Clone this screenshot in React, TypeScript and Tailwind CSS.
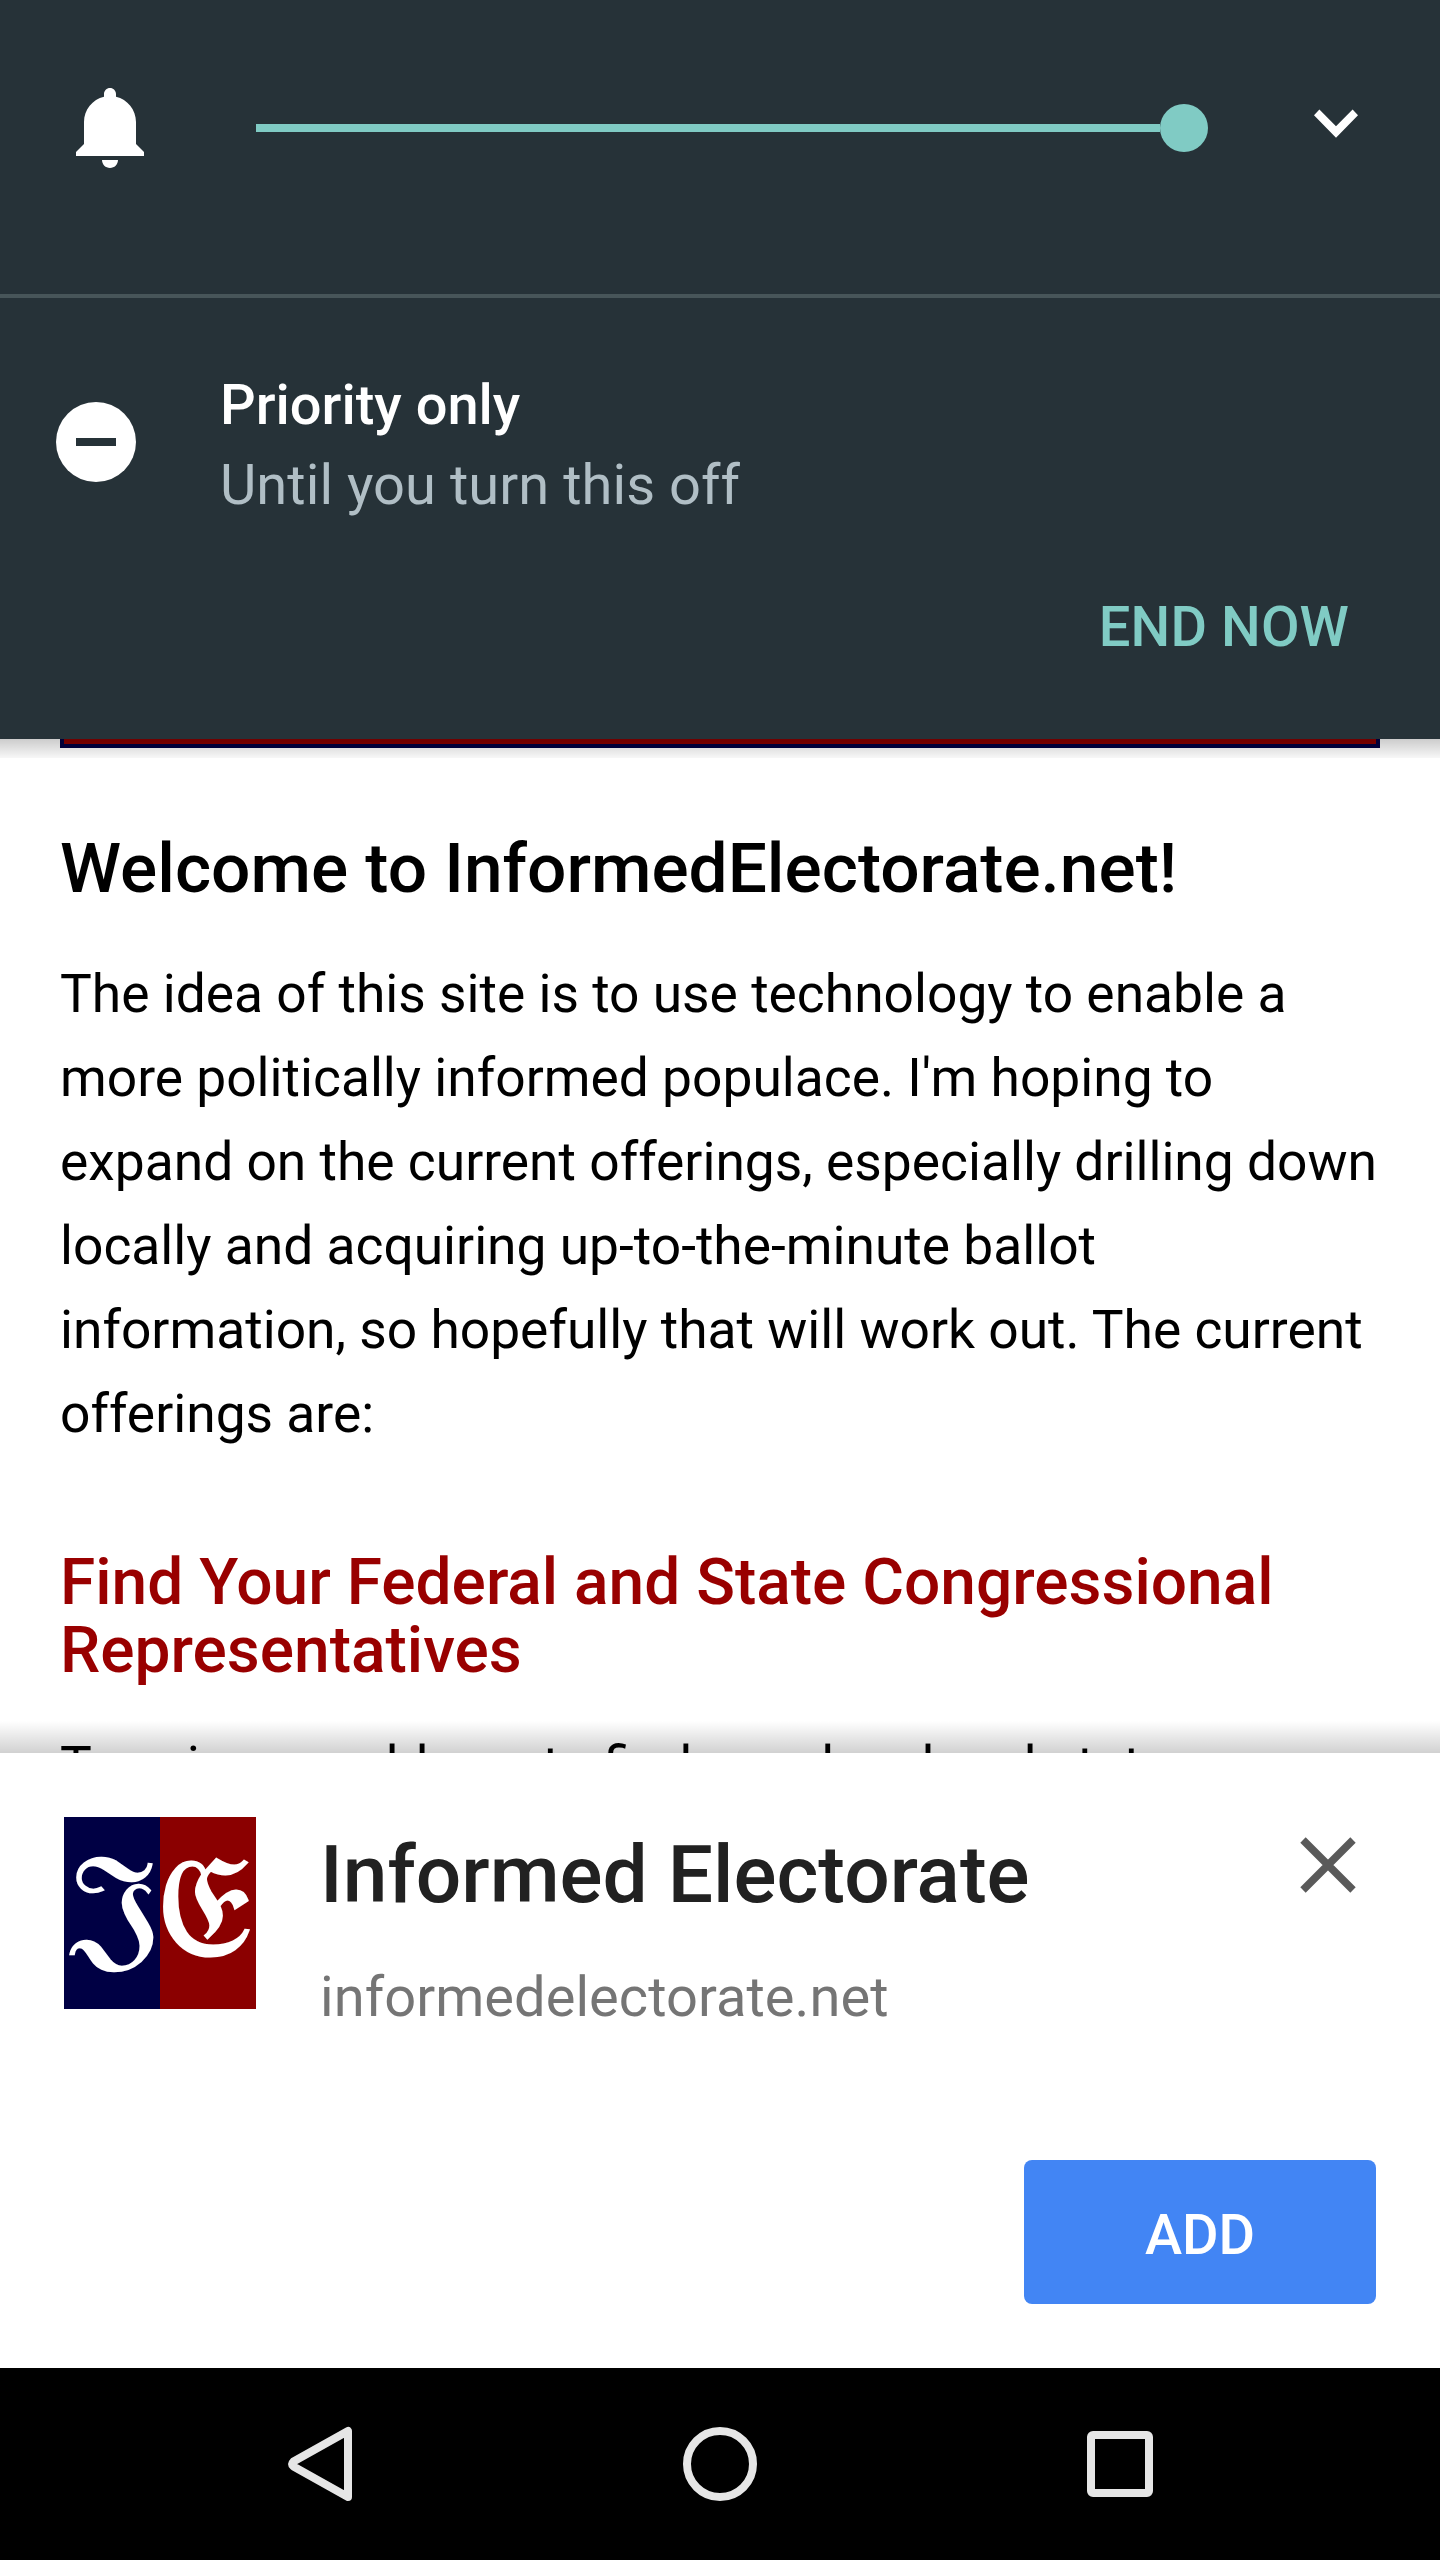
function VolumePanel() {
  return (
    <header className="h-[739px] shrink-0 bg-[#263238]">
      <div className="flex h-[294px] items-start">
        <svg className="mt-[80px] ml-[64px] size-[96px] fill-white" viewBox="0 0 24 24">
          <path d="M11.5 22c1.1 0 2-.9 2-2h-4c0 1.1.9 2 2 2zm6.5-6v-5.5c0-3.07-2.13-5.64-5-6.32V3.5c0-.83-.67-1.5-1.5-1.5S10 2.67 10 3.5v.68c-2.87.68-5 3.25-5 6.32V16l-2 2v1h17v-1l-2-2z" />
        </svg>
        <div className="mt-[104px] ml-[96px] flex h-12 w-[952px] items-center">
          <div className="h-2 flex-1 bg-[#80cbc4]" />
          <div className="size-12 rounded-full bg-[#80cbc4]" />
        </div>
        <svg className="mt-[76px] ml-[80px] size-[96px] fill-white" viewBox="0 0 96 96">
          <path d="M26 39.3 31.4 33.6 48 50.2 64.6 33.6 70 39.3 48 61.8Z" />
        </svg>
      </div>
      <div className="h-1 bg-[#475559]" />
      <div className="flex pt-[67px] pl-[56px]">
        <div className="mt-[37px] flex size-20 items-center justify-center rounded-full bg-white">
          <div className="h-2 w-10 bg-[#263238]" />
        </div>
        <div className="ml-[84px] text-[56px] leading-[80px]">
          <p className="font-medium text-white">Priority only</p>
          <p className="tracking-[0.05px] text-[#b0bec5]">Until you turn this off</p>
        </div>
      </div>
      <div className="mt-[69px] flex justify-end pr-[91px]">
        <button className="text-[56px] leading-[66px] font-medium tracking-[0.1px] text-[#80cbc4]">END NOW</button>
      </div>
    </header>
  );
}

function SitePage() {
  return (
    <main className="relative h-[1014px] shrink-0 overflow-hidden bg-white px-[60px] text-black">
      <div className="h-[9px] border-4 border-t-0 border-[#000044] bg-[#8b0000]" />
      <h1 className="mt-[80px] text-[69.4px] leading-[82px] font-medium whitespace-nowrap">
        Welcome to InformedElectorate.net!
      </h1>
      <p className="mt-[42px] text-[53.33px] leading-[84px] whitespace-nowrap">
        The idea of this site is to use technology to enable a<br />
        more politically informed populace. I'm hoping to<br />
        expand on the current offerings, especially drilling down<br />
        locally and acquiring up-to-the-minute ballot<br />
        information, so hopefully that will work out. The current<br />
        offerings are:
      </p>
      <h2 className="mt-[93px] text-[64px] leading-[68px] font-medium whitespace-nowrap text-[#990000]">
        Find Your Federal and State Congressional<br />
        Representatives
      </h2>
      <p className="mt-[39px] text-[53.33px] leading-[84px] whitespace-nowrap">
        Type in any address to find your local and state
      </p>
      <div className="absolute inset-x-0 top-0 h-[19px] bg-linear-to-b from-black/20 to-black/3" />
      <div className="absolute inset-x-0 bottom-0 h-[32px] bg-linear-to-b from-black/0 to-black/18" />
    </main>
  );
}

function SiteLogo() {
  return (
    <svg className="size-[192px]" viewBox="0 0 192 192">
      <rect width="96" height="192" fill="#000044" />
      <rect x="96" width="96" height="192" fill="#8b0000" />
      <g fill="#fff" stroke="#fff" strokeWidth="3" fontFamily="'Liberation Serif', serif">
        <text transform="translate(7.3 132.7) scale(0.965 0.897)" fontSize="150">𝔍</text>
        <text transform="translate(93 138) scale(1.12 1.025)" fontSize="136">𝔈</text>
      </g>
    </svg>
  );
}

function AddSheet() {
  return (
    <section className="flex h-[615px] shrink-0 flex-col bg-white px-[64px] pt-[64px] pb-[64px]">
      <div className="flex items-start">
        <SiteLogo />
        <div className="ml-[64px] pt-[11px]">
          <h2 className="text-[80.25px] leading-[94px] font-medium text-[#212121]">Informed Electorate</h2>
          <p className="mt-[42px] text-[56px] leading-[66px] tracking-[0.05px] text-[#757575]">informedelectorate.net</p>
        </div>
        <svg className="mt-[20px] mr-[20px] ml-auto size-[56px]" viewBox="0 0 56 56" stroke="#5a5a5a" strokeWidth="7.6">
          <path d="M3 3 53 53M53 3 3 53" />
        </svg>
      </div>
      <button className="mt-auto h-[144px] w-[352px] self-end rounded-[8px] bg-[#4285f4] pt-[5px] text-[56px] font-medium text-white">
        ADD
      </button>
    </section>
  );
}

function NavBar() {
  return (
    <nav className="flex h-[192px] shrink-0 items-center justify-between bg-black px-[272px]">
      <svg className="size-[96px]" viewBox="0 0 96 96" fill="none" stroke="#e6e6e6" strokeWidth="8" strokeLinejoin="round">
        <path d="M76 15V81L21.5 50.5Q19 48 21.5 45.5Z" />
      </svg>
      <svg className="size-[96px]" viewBox="0 0 96 96" fill="none" stroke="#e6e6e6" strokeWidth="8">
        <circle cx="48" cy="48" r="33" />
      </svg>
      <svg className="size-[96px]" viewBox="0 0 96 96" fill="none" stroke="#e6e6e6" strokeWidth="8">
        <rect x="19" y="19" width="58" height="58" rx="2" />
      </svg>
    </nav>
  );
}

export default function App() {
  return (
    <div className="flex h-[2560px] w-[1440px] flex-col overflow-hidden font-['Roboto',sans-serif]">
      <VolumePanel />
      <SitePage />
      <AddSheet />
      <NavBar />
    </div>
  );
}
